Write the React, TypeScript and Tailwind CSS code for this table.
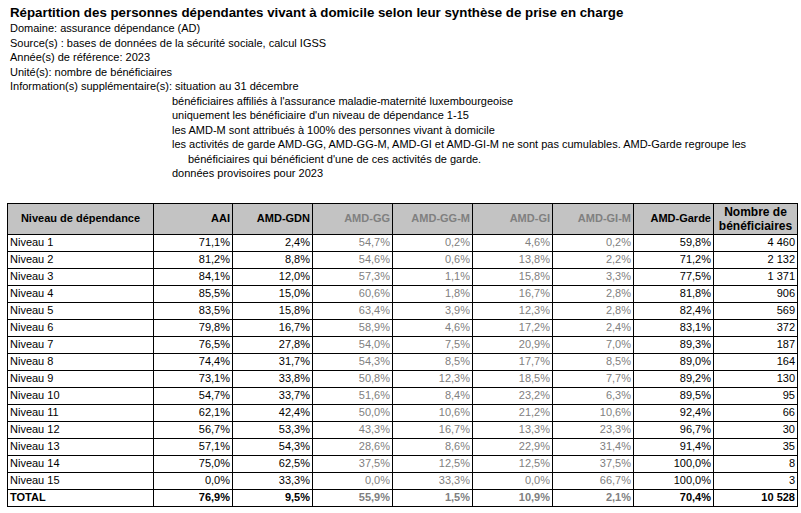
import { FC } from "react";

type Row = {
  label: string;
  aai: string;
  gdn: string;
  gg: string;
  ggm: string;
  gi: string;
  gim: string;
  garde: string;
  nb: string;
};

const rows: Row[] = [
  { label: "Niveau 1", aai: "71,1%", gdn: "2,4%", gg: "54,7%", ggm: "0,2%", gi: "4,6%", gim: "0,2%", garde: "59,8%", nb: "4 460" },
  { label: "Niveau 2", aai: "81,2%", gdn: "8,8%", gg: "54,6%", ggm: "0,6%", gi: "13,8%", gim: "2,2%", garde: "71,2%", nb: "2 132" },
  { label: "Niveau 3", aai: "84,1%", gdn: "12,0%", gg: "57,3%", ggm: "1,1%", gi: "15,8%", gim: "3,3%", garde: "77,5%", nb: "1 371" },
  { label: "Niveau 4", aai: "85,5%", gdn: "15,0%", gg: "60,6%", ggm: "1,8%", gi: "16,7%", gim: "2,8%", garde: "81,8%", nb: "906" },
  { label: "Niveau 5", aai: "83,5%", gdn: "15,8%", gg: "63,4%", ggm: "3,9%", gi: "12,3%", gim: "2,8%", garde: "82,4%", nb: "569" },
  { label: "Niveau 6", aai: "79,8%", gdn: "16,7%", gg: "58,9%", ggm: "4,6%", gi: "17,2%", gim: "2,4%", garde: "83,1%", nb: "372" },
  { label: "Niveau 7", aai: "76,5%", gdn: "27,8%", gg: "54,0%", ggm: "7,5%", gi: "20,9%", gim: "7,0%", garde: "89,3%", nb: "187" },
  { label: "Niveau 8", aai: "74,4%", gdn: "31,7%", gg: "54,3%", ggm: "8,5%", gi: "17,7%", gim: "8,5%", garde: "89,0%", nb: "164" },
  { label: "Niveau 9", aai: "73,1%", gdn: "33,8%", gg: "50,8%", ggm: "12,3%", gi: "18,5%", gim: "7,7%", garde: "89,2%", nb: "130" },
  { label: "Niveau 10", aai: "54,7%", gdn: "33,7%", gg: "51,6%", ggm: "8,4%", gi: "23,2%", gim: "6,3%", garde: "89,5%", nb: "95" },
  { label: "Niveau 11", aai: "62,1%", gdn: "42,4%", gg: "50,0%", ggm: "10,6%", gi: "21,2%", gim: "10,6%", garde: "92,4%", nb: "66" },
  { label: "Niveau 12", aai: "56,7%", gdn: "53,3%", gg: "43,3%", ggm: "16,7%", gi: "13,3%", gim: "23,3%", garde: "96,7%", nb: "30" },
  { label: "Niveau 13", aai: "57,1%", gdn: "54,3%", gg: "28,6%", ggm: "8,6%", gi: "22,9%", gim: "31,4%", garde: "91,4%", nb: "35" },
  { label: "Niveau 14", aai: "75,0%", gdn: "62,5%", gg: "37,5%", ggm: "12,5%", gi: "12,5%", gim: "37,5%", garde: "100,0%", nb: "8" },
  { label: "Niveau 15", aai: "0,0%", gdn: "33,3%", gg: "0,0%", ggm: "33,3%", gi: "0,0%", gim: "66,7%", garde: "100,0%", nb: "3" },
];

const total: Row = { label: "TOTAL", aai: "76,9%", gdn: "9,5%", gg: "55,9%", ggm: "1,5%", gi: "10,9%", gim: "2,1%", garde: "70,4%", nb: "10 528" };

const notes = [
  "bénéficiaires affiliés à l'assurance maladie-maternité luxembourgeoise",
  "uniquement les bénéficiaire d'un niveau de dépendance 1-15",
  "les AMD-M sont attribués à 100% des personnes vivant à domicile",
];

const cell = "border border-black px-[2px] h-[17px] py-0 text-right whitespace-nowrap";
const gray = "text-[#808080]";
// dithered grey like the spreadsheet export
const shade = "bg-[repeating-conic-gradient(#b3b3b3_0_25%,#d2d2d2_0_50%)] bg-size-[2px_2px]";
const head = `border border-black px-[2px] h-[31px] py-0 text-right font-bold whitespace-nowrap ${shade}`;

const DataRow: FC<{ r: Row; bold?: boolean }> = ({ r, bold }) => (
  <tr className={bold ? "font-bold" : ""}>
    <td className="border border-black px-[2px] h-[17px] py-0 text-left">{r.label}</td>
    <td className={cell}>{r.aai}</td>
    <td className={cell}>{r.gdn}</td>
    <td className={`${cell} ${gray}`}>{r.gg}</td>
    <td className={`${cell} ${gray}`}>{r.ggm}</td>
    <td className={`${cell} ${gray}`}>{r.gi}</td>
    <td className={`${cell} ${gray}`}>{r.gim}</td>
    <td className={cell}>{r.garde}</td>
    <td className={cell}>{r.nb}</td>
  </tr>
);

const App: FC = () => {
  return (
    <div className="w-[801px] h-[513px] bg-white text-black font-['Liberation_Sans',Arial,sans-serif] text-[11px] leading-[14.5px] overflow-hidden">
      <div className="pl-[10px] pt-[5px]">
        <h1 className="font-bold text-[13.3px] leading-[16px]">
          Répartition des personnes dépendantes vivant à domicile selon leur synthèse de prise en charge
        </h1>
        <div>Domaine: assurance dépendance (AD)</div>
        <div>Source(s) : bases de données de la sécurité sociale, calcul IGSS</div>
        <div>Année(s) de référence: 2023</div>
        <div>Unité(s): nombre de bénéficiaires</div>
        <div className="flex gap-[3px] whitespace-nowrap">
          <span>Information(s) supplémentaire(s):</span>
          <span>situation au 31 décembre</span>
        </div>
        <div className="pl-[162px]">
          {notes.map((n, i) => (
            <div key={i}>{n}</div>
          ))}
          <div className="w-[590px] pl-[16px] -indent-[16px]">
            les activités de garde AMD-GG, AMD-GG-M, AMD-GI et AMD-GI-M ne sont pas cumulables. AMD-Garde regroupe les bénéficiaires qui bénéficient d'une de ces activités de garde.
          </div>
          <div>données provisoires pour 2023</div>
        </div>
      </div>

      <table className="ml-[7px] mt-[22px] border-collapse table-fixed w-[790px]">
        <colgroup>
          <col className="w-[146px]" />
          <col className="w-[79px]" />
          <col className="w-[80px]" />
          <col className="w-[80px]" />
          <col className="w-[80px]" />
          <col className="w-[80px]" />
          <col className="w-[81px]" />
          <col className="w-[80px]" />
          <col className="w-[84px]" />
        </colgroup>
        <thead>
          <tr>
            <th className={`border border-black px-[2px] h-[31px] py-0 text-center font-bold ${shade}`}>Niveau de dépendance</th>
            <th className={head}>AAI</th>
            <th className={head}>AMD-GDN</th>
            <th className={`${head} ${gray}`}>AMD-GG</th>
            <th className={`${head} ${gray}`}>AMD-GG-M</th>
            <th className={`${head} ${gray}`}>AMD-GI</th>
            <th className={`${head} ${gray}`}>AMD-GI-M</th>
            <th className={head}>AMD-Garde</th>
            <th className={`border border-black px-[2px] h-[31px] py-0 text-center font-bold text-[12px] leading-[14px] ${shade}`}>
              Nombre de<br />bénéficiaires
            </th>
          </tr>
        </thead>
        <tbody>
          {rows.map((r) => (
            <DataRow key={r.label} r={r} />
          ))}
          <DataRow r={total} bold />
        </tbody>
      </table>
    </div>
  );
};

export default App;
